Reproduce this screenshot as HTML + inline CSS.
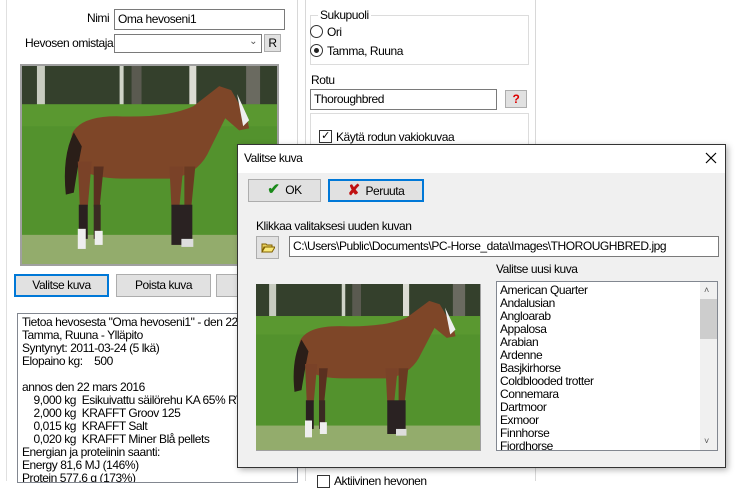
<!DOCTYPE html>
<html><head><style>
*{box-sizing:border-box;margin:0;padding:0}
body{width:738px;height:481px;overflow:hidden;background:#fff;font-family:"Liberation Sans",sans-serif;font-size:12px;letter-spacing:-0.45px;color:#000;position:relative}
.a{position:absolute;white-space:nowrap}
.in{position:absolute;border:1px solid #7a7a7a;background:#fff;padding:2px 0 0 3px}
.btn{position:absolute;border:1px solid #adadad;background:#e1e1e1;text-align:center;line-height:20px}
</style></head><body>
<svg width="0" height="0" style="position:absolute">
<defs>
<symbol id="ph" viewBox="0 0 256 197" preserveAspectRatio="none">
<rect width="256" height="197" fill="#5c9a34"/>
<rect width="256" height="42" fill="#34402c"/>
<rect x="15" y="0" width="8" height="42" fill="#c8ccc0"/>
<rect x="98" y="0" width="4" height="42" fill="#d0d4c8"/>
<rect x="168" y="0" width="7" height="42" fill="#dcdcd4"/>
<rect x="225" y="0" width="14" height="42" fill="#6a6a60"/>
<rect x="110" y="0" width="10" height="42" fill="#5a5a50"/>
<rect x="0" y="38" width="256" height="132" fill="#5a9830"/>
<rect x="0" y="60" width="256" height="110" fill="#4f8e2c" opacity=".6"/>
<rect x="0" y="168" width="256" height="29" fill="#93ac6c"/>
<path d="M50 68 Q58 50 95 50 Q145 52 172 40 L198 20 L210 24 L226 52 L228 62 L218 64 L204 52 L186 88 Q175 108 150 112 L100 112 Q72 112 58 102 Q48 90 50 68 Z" fill="#7e4628"/>
<path d="M52 66 Q40 90 44 128 L52 126 Q56 100 60 80 Z" fill="#2a1e18"/>
<path d="M56 95 L70 95 L66 140 L58 140 Z" fill="#7a4228"/>
<path d="M72 100 L82 100 L78 140 L72 140 Z" fill="#5a3020"/>
<path d="M148 100 L162 100 L158 140 L150 140 Z" fill="#7a4228"/>
<path d="M163 100 L174 100 L170 140 L163 140 Z" fill="#6a3a22"/>
<rect x="57" y="138" width="9" height="34" fill="#2a2020"/>
<rect x="72" y="138" width="7" height="34" fill="#3a2a22"/>
<rect x="150" y="138" width="21" height="40" fill="#2a2222"/>
<rect x="56" y="162" width="8" height="20" fill="#eee"/>
<rect x="73" y="164" width="8" height="14" fill="#eee"/>
<rect x="160" y="172" width="12" height="8" fill="#ddd"/>
<path d="M216 28 L228 54 L222 60 Z" fill="#eee"/>
</symbol>
</defs>
</svg>

<div class="a" style="left:6px;top:0;width:1px;height:481px;background:#e0e0e0"></div>
<div class="a" style="left:297px;top:0;width:1px;height:481px;background:#d8d8d8"></div>
<div class="a" style="left:305px;top:0;width:1px;height:481px;background:#d8d8d8"></div>
<div class="a" style="left:535px;top:0;width:1px;height:481px;background:#d8d8d8"></div>

<div class="a" style="left:87px;top:11px">Nimi</div>
<div class="in" style="left:114px;top:9px;width:171px;height:21px">Oma hevoseni1</div>
<div class="a" style="left:25px;top:36px">Hevosen omistaja</div>
<div class="in" style="left:114px;top:34px;width:148px;height:19px"><span style="position:absolute;right:4px;top:1px;font-size:10px;color:#555">&#8964;</span></div>
<div class="btn" style="left:264px;top:34px;width:17px;height:18px;line-height:16px">R</div>
<div class="a" style="left:20px;top:64px;width:259px;height:202px;border:2px solid #a0a0a0;background:#a0a0a0"><svg width="255" height="198" style="display:block"><use href="#ph"/></svg></div>

<div class="btn" style="left:14px;top:274px;width:95px;height:23px;border:2px solid #0078d7;line-height:19px">Valitse kuva</div>
<div class="btn" style="left:116px;top:274px;width:95px;height:23px">Poista kuva</div>
<div class="btn" style="left:216px;top:274px;width:40px;height:23px"></div>

<div class="a" style="left:17px;top:313px;width:281px;height:170px;border:1px solid #828790;padding:2px 4px;line-height:13px;overflow:hidden">Tietoa hevosesta "Oma hevoseni1" - den 22 mars 2016<br>Tamma, Ruuna - Ylläpito<br>Syntynyt: 2011-03-24 (5 lkä)<br>Elopaino kg:&nbsp;&nbsp;&nbsp; 500<br><br>annos den 22 mars 2016<br>&nbsp;&nbsp;&nbsp; 9,000 kg&nbsp; Esikuivattu säilörehu KA 65% RV<br>&nbsp;&nbsp;&nbsp; 2,000 kg&nbsp; KRAFFT Groov 125<br>&nbsp;&nbsp;&nbsp; 0,015 kg&nbsp; KRAFFT Salt<br>&nbsp;&nbsp;&nbsp; 0,020 kg&nbsp; KRAFFT Miner Blå pellets<br>Energian ja proteiinin saanti:<br>Energy 81,6 MJ (146%)<br>Protein 577,6 g (173%)</div>

<div class="a" style="left:310px;top:15px;width:219px;height:50px;border:1px solid #dcdcdc"></div>
<div class="a" style="left:318px;top:8px;background:#fff;padding:0 2px">Sukupuoli</div>
<div class="a" style="left:310px;top:25px;width:13px;height:13px;border:1px solid #333;border-radius:50%"></div>
<div class="a" style="left:327px;top:25px">Ori</div>
<div class="a" style="left:310px;top:44px;width:13px;height:13px;border:1px solid #333;border-radius:50%"><div style="margin:3px;width:5px;height:5px;border-radius:50%;background:#222"></div></div>
<div class="a" style="left:327px;top:44px">Tamma, Ruuna</div>
<div class="a" style="left:311px;top:73px">Rotu</div>
<div class="in" style="left:310px;top:89px;width:187px;height:21px">Thoroughbred</div>
<div class="btn" style="left:505px;top:90px;width:22px;height:18px;line-height:16px;color:#d00;font-weight:bold;background:#e1e1e1">?</div>
<div class="a" style="left:310px;top:113px;width:219px;height:40px;border:1px solid #dcdcdc"></div>
<div class="a" style="left:319px;top:130px;width:13px;height:13px;border:1px solid #333;font-size:11px;line-height:11px;text-align:center">✓</div>
<div class="a" style="left:336px;top:130px">Käytä rodun vakiokuvaa</div>
<div class="a" style="left:317px;top:475px;width:13px;height:13px;border:1px solid #333"></div>
<div class="a" style="left:334px;top:474px">Aktiivinen hevonen</div>

<div class="a" style="left:237px;top:144px;width:489px;height:324px;border:1px solid #333;background:#f0f0f0;box-shadow:2px 2px 6px rgba(0,0,0,.3)">
 <div style="position:absolute;left:0;top:0;width:487px;height:28px;background:#fff"></div>
 <div class="a" style="left:6px;top:6px;font-size:12px">Valitse kuva</div>
 <svg class="a" style="left:467px;top:7px" width="12" height="12"><path d="M1 1L11 11M11 1L1 11" stroke="#000" stroke-width="1.2"/></svg>
 <div class="btn" style="left:10px;top:34px;width:73px;height:23px"><span style="color:#1a8a1a;font-weight:bold;font-size:15px">✔</span>&nbsp; OK</div>
 <div class="btn" style="left:90px;top:34px;width:96px;height:23px;border:2px solid #0078d7;line-height:19px"><span style="color:#c01010;font-weight:bold;font-size:15px">✘</span>&nbsp; Peruuta</div>
 <div class="a" style="left:18px;top:74px">Klikkaa valitaksesi uuden kuvan</div>
 <div class="btn" style="left:18px;top:91px;width:23px;height:23px"><svg width="14" height="11" style="margin-top:5px"><path d="M1 2h4l1 1h5v2H3L1 10z" fill="#e8d060" stroke="#806000"/><path d="M1 10l3-5h10l-3 5z" fill="#f8e878" stroke="#806000"/></svg></div>
 <div class="in" style="left:51px;top:91px;width:430px;height:21px">C:\Users\Public\Documents\PC-Horse_data\Images\THOROUGHBRED.jpg</div>
 <div class="a" style="left:258px;top:117px">Valitse uusi kuva</div>
 <div class="a" style="left:18px;top:139px;width:225px;height:167px;background:#a0a0a0"><svg width="224" height="166" style="display:block"><use href="#ph"/></svg></div>
 <div class="a" style="left:258px;top:136px;width:222px;height:170px;border:1px solid #828790;background:#fff;overflow:hidden;line-height:13px;padding:2px 3px">American Quarter<br>Andalusian<br>Angloarab<br>Appalosa<br>Arabian<br>Ardenne<br>Basjkirhorse<br>Coldblooded trotter<br>Connemara<br>Dartmoor<br>Exmoor<br>Finnhorse<br>Fjordhorse
  <div style="position:absolute;right:0;top:0;width:17px;height:168px;background:#f0f0f0"><div style="margin-top:17px;height:40px;background:#cdcdcd"></div><div style="position:absolute;top:2px;left:4px;font-size:9px;color:#555">˄</div><div style="position:absolute;bottom:2px;left:4px;font-size:9px;color:#555">˅</div></div>
 </div>
</div>
</body></html>
